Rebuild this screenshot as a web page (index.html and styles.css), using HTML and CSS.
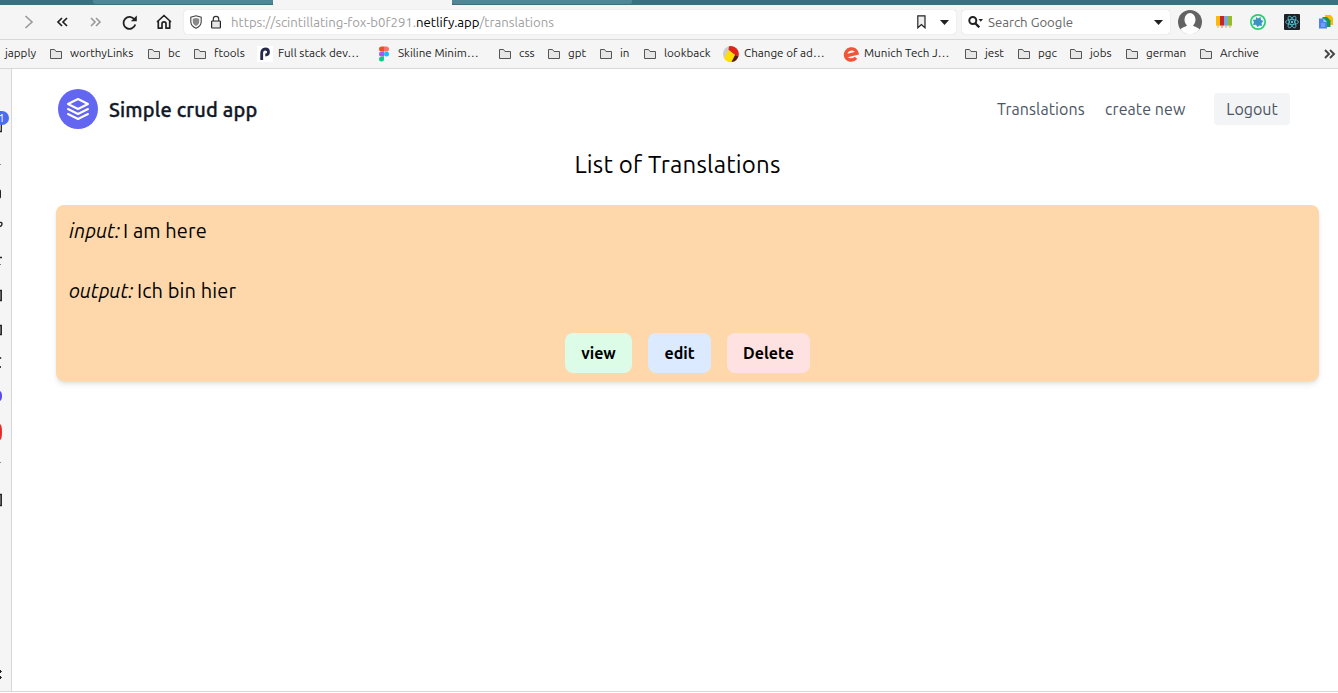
FILE: index.html
```html
<!DOCTYPE html>
<html lang="en">
<head>
<meta charset="utf-8">
<title>Simple crud app</title>
<link rel="stylesheet" href="styles.css">
</head>
<body>
<svg class="defs" aria-hidden="true">
  <symbol id="folder" viewBox="0 0 12 12"><path d="M.5 10.500V1.500h4l1.500 2h5.500v7H.5z" fill="#e6e6e6" stroke="#555"/></symbol>
</svg>
<div class="tabs"><span class="tab"></span><span class="tab active"></span><span class="tab"></span></div>
<div class="toolbar">
  <svg class="nav-icon" viewBox="0 0 34 24"><path d="M13.500 6l6.500 6-6.500 6" fill="none" stroke="#999" stroke-width="1.600"/></svg>
  <svg class="nav-icon" viewBox="0 0 34 24"><path d="M16 8l-4 4 4 4M21 8l-4 4 4 4" fill="none" stroke="#222" stroke-width="1.700"/></svg>
  <svg class="nav-icon" viewBox="0 0 34 24"><path d="M11 8l4 4-4 4M16 8l4 4-4 4" fill="none" stroke="#999" stroke-width="1.600"/></svg>
  <svg class="nav-icon" viewBox="0 0 34 24"><path d="M20.500 9.500A6 6 0 1 0 21.300 14.500" fill="none" stroke="#222" stroke-width="1.800"/><path d="M22.800 5.500v5.700h-6z" fill="#222"/></svg>
  <svg class="nav-icon" viewBox="0 0 34 24"><path d="M9.500 11.500L16 5.500l6.500 6M10.300 11v7.200h3.700v-4.400a2 2 0 0 1 4 0v4.400h3.700V11" fill="none" stroke="#222" stroke-width="1.700" stroke-linejoin="round" stroke-linecap="round"/></svg>
  <div class="urlbar">
    <svg class="shield" viewBox="0 0 12 14"><path d="M6 .8l5.200 1.400v4.300c0 3.600-2.400 5.600-5.200 6.800C3.200 12.100.8 10.100.8 6.500V2.200z" fill="#fff" stroke="#444" stroke-width="1.100"/><path d="M6 3l3.200.8v3c0 2.100-1.500 3.400-3.200 4.200-1.700-.8-3.200-2.100-3.200-4.200v-3z" fill="#888"/></svg>
    <svg class="lock" viewBox="0 0 10 14"><path d="M2.300 6V4a2.700 2.700 0 0 1 5.400 0v2" fill="none" stroke="#333" stroke-width="1.200"/><rect x=".6" y="6" width="8.800" height="7" rx=".8" fill="#e6e6e6" stroke="#222" stroke-width="1.200"/></svg>
    <span class="url">https://scintillating-fox-b0f291.<b>netlify.app</b>/translations</span>
    <svg class="bookmark" viewBox="0 0 9 14"><path d="M.8.800h7.200v12L4.400 9.500.8 12.800z" fill="#eee" stroke="#222" stroke-width="1.200"/></svg>
    <svg class="caret" viewBox="0 0 9 5"><path d="M0 0h9L4.500 5z" fill="#222"/></svg>
  </div>
  <div class="search">
    <svg class="magnifier" viewBox="0 0 15 12"><circle cx="4.800" cy="4.500" r="3.500" fill="none" stroke="#222" stroke-width="2"/><path d="M7 7l4.300 4.300" stroke="#222" stroke-width="2.400"/><path d="M10.500 3h4.500l-2.250 2.700z" fill="#222"/></svg>
    <span class="search-text">Search Google</span>
    <svg class="caret" viewBox="0 0 9 5"><path d="M0 0h9L4.500 5z" fill="#222"/></svg>
  </div>
  <div class="extensions">
    <svg class="avatar" viewBox="0 0 24 24"><circle cx="12" cy="12" r="12" fill="#636363"/><path d="M2.500 19.500c1-2.200 5-2.500 6.500-4-2-2-2.500-4-2.500-6a5.500 6.500 0 0 1 11 0c0 2-.5 4-2.500 6 1.500 1.500 5.500 1.800 6.500 4A12 12 0 0 1 2.500 19.500z" fill="#fff"/></svg>
    <svg class="ext" viewBox="0 0 16 16"><path d="M0 2h4v9l-2 3-2-3z" fill="#fbb90c"/><path d="M4 2h4v9l-2 3-2-3z" fill="#c4252b"/><path d="M8 2h4v9l-2 3-2-3z" fill="#78acd8"/><path d="M12 2h4v9l-2 3-2-3z" fill="#95ba2c"/><path d="M.5 11.500h3L2 14zM4.500 11.500h3L6 14zM8.500 11.500h3L10 14zM12.500 11.500h3L14 14z" fill="#f0cba5"/></svg>
    <svg class="ext" viewBox="0 0 16 16"><circle cx="8" cy="8" r="8" fill="#2bcc71"/><circle cx="8" cy="8" r="6.300" fill="#e4f6ef"/><path d="M6 3l2 1.500L10.500 3l.5 3 2.500 1-2 2 .5 3-2.500-.5L7.500 13 6 10.800 3 11l1-3L2.700 6 6 5.600z" fill="#3b91c4"/></svg>
    <svg class="ext" viewBox="0 0 16 16"><rect width="16" height="16" rx="1" fill="#202124"/><g fill="none" stroke="#58c4dc" stroke-width=".8"><ellipse cx="8" cy="8" rx="6.500" ry="2.500"/><ellipse cx="8" cy="8" rx="6.500" ry="2.500" transform="rotate(60 8 8)"/><ellipse cx="8" cy="8" rx="6.500" ry="2.500" transform="rotate(120 8 8)"/></g><circle cx="8" cy="8" r="1.200" fill="#58c4dc"/></svg>
    <svg class="ext" viewBox="0 0 16 16"><path d="M7 1h5.500L15 3.500V11H7z" fill="#fbbc04"/><path d="M4.500 3H9l3.500 3.500V13h-8z" fill="#159a55"/><path d="M1 4.500h5L9 8v6.500H1z" fill="#4c83f1"/><path d="M5.500 4.500L9 8H5.500z" fill="#a9c6ff"/><path d="M3 10h4M3 12h4" stroke="#a9c6ff" stroke-width=".8"/></svg>
  </div>
</div>
<div class="bookmarks">
  <span class="mark">japply</span>
  <span class="mark"><svg class="folder"><use href="#folder"/></svg>worthyLinks</span>
  <span class="mark"><svg class="folder"><use href="#folder"/></svg>bc</span>
  <span class="mark"><svg class="folder"><use href="#folder"/></svg>ftools</span>
  <span class="mark site"><svg viewBox="0 0 16 16"><rect width="16" height="16" fill="#fff"/><path d="M4.700 14V7.200C4.700 4.500 6 3 8.200 3c2.200 0 3.300 1.200 3.300 3S10.300 9 8.300 9" fill="none" stroke="#25294a" stroke-width="2.800"/></svg>Full stack dev…</span>
  <span class="mark figma"><svg viewBox="0 0 10 16"><path d="M5 .5H2.500a2.500 2.500 0 0 0 0 5H5z" fill="#f24e1e"/><path d="M5 .5h2.500a2.500 2.500 0 0 1 0 5H5z" fill="#ff7262"/><path d="M5 5.500H2.500a2.500 2.500 0 0 0 0 5H5z" fill="#a259ff"/><circle cx="7.500" cy="8" r="2.500" fill="#1abcfe"/><path d="M5 10.500H2.500A2.500 2.500 0 1 0 5 13z" fill="#0acf83"/></svg>Skiline Minim…</span>
  <span class="mark"><svg class="folder"><use href="#folder"/></svg>css</span>
  <span class="mark"><svg class="folder"><use href="#folder"/></svg>gpt</span>
  <span class="mark"><svg class="folder"><use href="#folder"/></svg>in</span>
  <span class="mark"><svg class="folder"><use href="#folder"/></svg>lookback</span>
  <span class="mark site"><svg viewBox="0 0 16 16"><circle cx="8" cy="8" r="8" fill="#ccc"/><path d="M6 .3A8 8 0 0 1 15.500 10L12 9 5.500 4z" fill="#e2231a"/><path d="M5.500 4l6.500 5-3.500 7A8 8 0 0 1 1 12z" fill="#ffdf00"/><path d="M12 9l3.500 1a8 8 0 0 1-7 6z" fill="#5b1a12"/></svg>Change of ad…</span>
  <span class="mark site"><svg viewBox="0 0 16 16"><path d="M3 9.800L14 7.200C13.300 4 10.600 2.400 7.500 3 4.200 3.600 2 6.700 2.600 10c.8 4.500 7.400 5.500 10.400 1.700" fill="none" stroke="#f05537" stroke-width="3.400"/></svg>Munich Tech J…</span>
  <span class="mark"><svg class="folder"><use href="#folder"/></svg>jest</span>
  <span class="mark"><svg class="folder"><use href="#folder"/></svg>pgc</span>
  <span class="mark"><svg class="folder"><use href="#folder"/></svg>jobs</span>
  <span class="mark"><svg class="folder"><use href="#folder"/></svg>german</span>
  <span class="mark"><svg class="folder"><use href="#folder"/></svg>Archive</span>
  <svg class="more" viewBox="0 0 12 12"><path d="M1 2l4 4-4 4M6 2l4 4-4 4" fill="none" stroke="#444" stroke-width="1.900"/></svg>
</div>
<div class="window">
  <div class="side">
    <svg viewBox="0 0 11 622" class="side-icons">
      <path d="M0 62.500h1.300V54" fill="none" stroke="#222" stroke-width="1.300"/>
      <path d="M0 95.500h1M0 393.500h1" stroke="#888"/>
      <path d="M0 120.500q1 0 1 2v5q0 2-1 2z" fill="#222"/>
      <path d="M0 153.500q2-.5 2 1.500t-2 2.500" fill="none" stroke="#222" stroke-width="1.400"/>
      <path d="M0 188.500h2" stroke="#222" stroke-width="1.500"/>
      <path d="M0 195.500h1" stroke="#777"/>
      <path d="M0 221.500h1.300v10H0M0 256.500h1.300v9H0M0 425.500h1.300v11H0" fill="#888" stroke="#222" stroke-width="1.300"/>
      <path d="M0 289h1.200M0 298h1" stroke="#444" stroke-width="2"/>
      <path d="M0 322q2 1 2 5t-2 5z" fill="#5a4bef"/>
      <path d="M0 355q2 1 2 8t-2 8z" fill="#ea2a2a"/>
      <path d="M0 601l1.500 1.500L0 604M0 607l1.500 1.500L0 610" fill="#222" stroke="#222"/>
    </svg>
    <span class="badge">1</span>
  </div>
  <main class="page">
    <header class="header">
      <div class="brand">
        <svg class="logo" viewBox="0 0 40 40"><circle cx="20" cy="20" r="20" fill="#6366f1"/><g fill="none" stroke="#fff" stroke-width="2" stroke-linejoin="round" stroke-linecap="round"><path d="M20 10l-10 5 10 5 10-5z"/><path d="M10 20l10 5 10-5M10 25l10 5 10-5"/></g></svg>
        <span class="brand-name">Simple crud app</span>
      </div>
      <nav class="nav"><a class="link-list">Translations</a><a class="link-new">create new</a><button class="logout">Logout</button></nav>
    </header>
    <h1 class="title"><span>List of Translations</span></h1>
    <section class="card">
      <p class="line"><em class="in-label">input:</em><span>I am here</span></p>
      <p class="line"><em class="out-label">output:</em><span>Ich bin hier</span></p>
      <div class="actions"><button class="btn view">view</button><button class="btn edit">edit</button><button class="btn delete">Delete</button></div>
    </section>
  </main>
</div>
</body>
</html>
```
FILE: styles.css
```css
* { box-sizing: border-box; }
body { margin: 0; width: 1338px; height: 693px; overflow: hidden; display: flex; flex-direction: column; background: #fff; font-family: Ubuntu, "Noto Sans", sans-serif; color: #000; }
svg { display: block; flex: none; }
button { font: inherit; letter-spacing: inherit; border: 0; padding: 0; white-space: nowrap; }
.defs { width: 0; height: 0; position: absolute; }
.tabs { height: 5px; flex: none; background: #3d6f7e; padding-left: 93px; display: flex; }
.tab { width: 180px; height: 4px; background: #528694; border-radius: 0 0 2px 2px; }
.tab.active { width: 179px; height: 5px; background: #f5f5f5; border-radius: 0; }
.toolbar { height: 35px; flex: none; background: #f5f5f5; border-bottom: 1px solid #d8d8d8; display: flex; align-items: center; padding-left: 12px; }
.nav-icon { width: 34px; height: 24px; }
.urlbar { margin-left: 2px; width: 772px; height: 24px; background: #fff; border-radius: 3px; display: flex; align-items: center; padding: 0 7px 0 6px; box-shadow: 0 0 1px #bbb; }
.shield { width: 12px; height: 14px; }
.lock { width: 10px; height: 14px; margin: 0 10px 0 9px; }
.url { font-size: 13.200px; line-height: 16px; margin-top: -1px; color: #a0a0a0; white-space: nowrap; }
.url b { font-weight: 400; color: #000; }
.bookmark { width: 9px; height: 14px; margin: 0 14px 0 auto; }
.caret { width: 9px; height: 5px; }
.search { margin-left: 6px; width: 208px; height: 24px; background: #fff; border-radius: 3px; display: flex; align-items: center; padding: 0 7px 0 6px; box-shadow: 0 0 1px #bbb; }
.magnifier { width: 15px; height: 12px; margin-right: 5px; }
.search-text { font-size: 13.200px; line-height: 16px; color: #666; white-space: nowrap; }
.search .caret { margin-left: auto; }
.extensions { display: flex; align-items: center; gap: 18px; margin-left: 8px; }
.avatar { width: 24px; height: 24px; margin-right: -4px; }
.ext { width: 16px; height: 16px; }
.bookmarks { height: 29px; flex: none; background: #f5f5f5; border-bottom: 1px solid #d8d8d8; padding: 0 0 1px 5px; display: grid; align-items: center; grid-template-columns: 45px 98px 46px 63px 122px 120px 49px 52px 44px 79px 120px 122px 53px 52px 56px 74px 124px 12px; font-size: 11.650px; line-height: 14px; color: #222; }
.mark { display: flex; align-items: center; white-space: nowrap; height: 16px; padding-bottom: 1px; }
.folder { width: 12px; height: 12px; margin: 1px 8px 0 0; }
.site svg { width: 16px; height: 16px; margin: 1px 5px 0 0; }
.figma svg { width: 10px; height: 16px; margin: 1px 9px 0 0; }
.more { width: 12px; height: 12px; }
.window { flex: none; height: 623px; display: flex; border-bottom: 1px solid #d8d8d8; }
.side { position: relative; width: 12px; background: #f5f5f5; border-right: 1px solid #d8d8d8; }
.side-icons { width: 11px; height: 622px; }
.badge { position: absolute; left: -6px; top: 42px; width: 15px; height: 14px; border-radius: 7px; background: #4a6cf0; color: #fff; font-size: 11px; line-height: 14px; text-align: center; }
.page { flex: 1; padding: 20px 19px 0 44px; }
.header { height: 40px; padding: 0 29px 0 2px; display: flex; align-items: center; justify-content: space-between; }
.brand { display: flex; align-items: center; gap: 11px; }
.logo { width: 40px; height: 40px; }
.brand-name { font-size: 20px; font-weight: 500; letter-spacing: .15px; -webkit-text-stroke: .35px #111827; color: #111827; white-space: nowrap; }
.nav { display: flex; align-items: center; font-size: 16px; letter-spacing: .08px; color: #4b5563; white-space: nowrap; }
.link-list { width: 108px; }
.link-new { width: 109px; }
.logout { width: 76px; height: 32px; border-radius: 4px; background: #f3f4f6; color: #4b5563; letter-spacing: 0; }
.title { margin: 20px 20px 0 0; height: 32px; line-height: 32px; text-align: center; font-size: 24px; font-weight: 400; letter-spacing: .2px; }
.card { margin-top: 24px; height: 176px; border-radius: 8px; background: #fed7aa; padding: 12px 13px 8px; box-shadow: 0 4px 6px -1px rgba(0,0,0,.1), 0 2px 4px -2px rgba(0,0,0,.1); }
.line { margin: 0 0 32px; height: 28px; line-height: 28px; font-size: 20px; letter-spacing: .1px; display: flex; }
.in-label { width: 54px; white-space: nowrap; }
.out-label { width: 68px; white-space: nowrap; }
.actions { display: flex; justify-content: center; gap: 16px; margin-top: -4px; }
.btn { height: 40px; border-radius: 8px; font-size: 16px; font-weight: 700; color: #000; }
.view { width: 67px; background: #dcfce7; }
.edit { width: 63px; background: #dbeafe; }
.delete { width: 83px; background: #fee2e2; }
```
